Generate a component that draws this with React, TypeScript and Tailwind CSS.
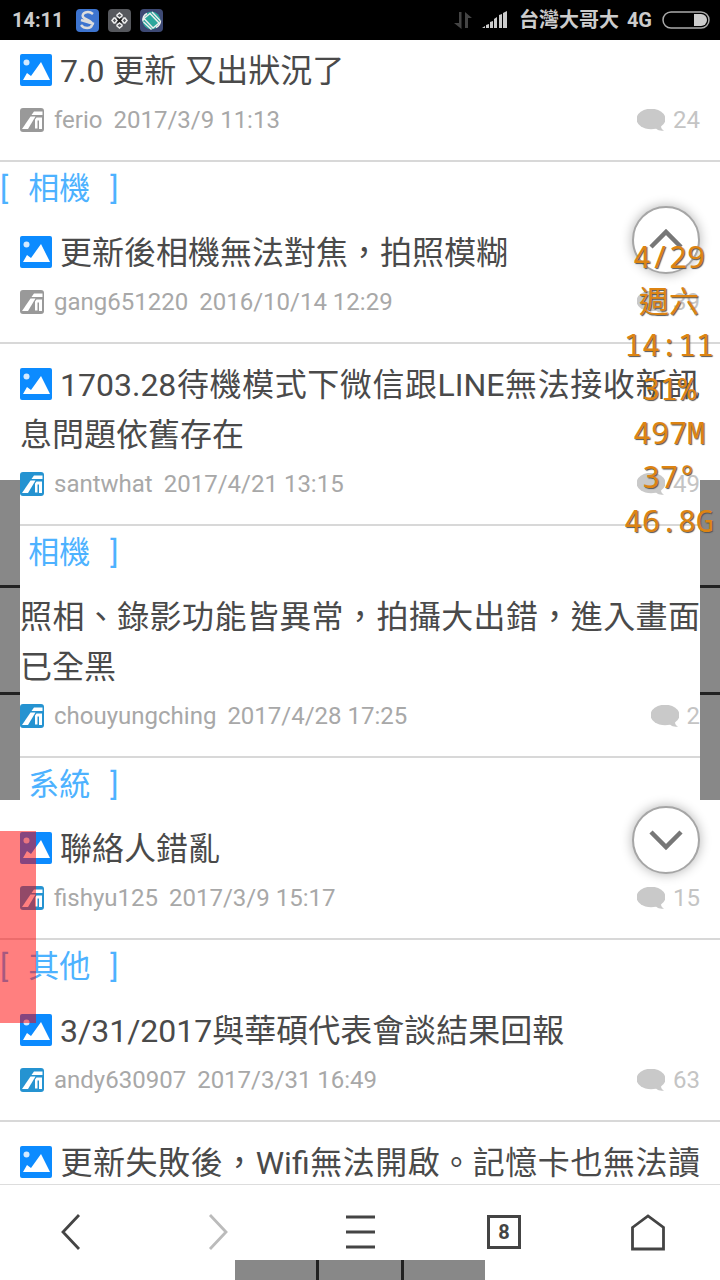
import { ReactNode } from "react";

type Post = {
  category?: string;
  title: string;
  hasImage?: boolean;
  author?: string;
  date?: string;
  replies?: number;
  asus?: boolean;
};

const posts: Post[] = [
  { title: "7.0 更新 又出狀況了", hasImage: true, author: "ferio", date: "2017/3/9 11:13", replies: 24 },
  { category: "相機", title: "更新後相機無法對焦，拍照模糊", hasImage: true, author: "gang651220", date: "2016/10/14 12:29", replies: 39 },
  { title: "1703.28待機模式下微信跟LINE無法接收新訊息問題依舊存在", hasImage: true, author: "santwhat", date: "2017/4/21 13:15", replies: 49, asus: true },
  { category: "相機", title: "照相、錄影功能皆異常，拍攝大出錯，進入畫面已全黑", author: "chouyungching", date: "2017/4/28 17:25", replies: 2, asus: true },
  { category: "系統", title: "聯絡人錯亂", hasImage: true, author: "fishyu125", date: "2017/3/9 15:17", replies: 15, asus: true },
  { category: "其他", title: "3/31/2017與華碩代表會談結果回報", hasImage: true, author: "andy630907", date: "2017/3/31 16:49", replies: 63, asus: true },
  { title: "更新失敗後，Wifi無法開啟。記憶卡也無法讀", hasImage: true },
];

const stats = ["4/29", "週六", "14:11", "31%", "497M", "37°", "46.8G"];

function ImageIcon() {
  return (
    <svg viewBox="0 0 32 32" className="mr-2 -mt-2 inline-block size-8 align-middle">
      <rect width="32" height="32" rx="2" fill="#0c8bff" />
      <circle cx="6.5" cy="8.5" r="3" fill="#d5eaff" />
      <path d="M3 26l4-7 4 3L21 8l9 18z" fill="#fff" />
    </svg>
  );
}

function AuthorIcon({ asus }: { asus?: boolean }) {
  return (
    <svg viewBox="0 0 24 24" className="size-6 shrink-0">
      <rect width="24" height="24" rx="3" fill={asus ? "#2593d1" : "#999"} />
      <path d="M2 21L10.500 8.500H15.500L8 21z" fill="#fff" />
      <path d="M11.500 7L14 3.500H22.500V7z" fill="#fff" />
      <path d="M16.500 9.500H22V21H19V12.500H17.500V20.500H15V11.500z" fill="#fff" />
    </svg>
  );
}

function BubbleIcon() {
  return (
    <svg viewBox="0 0 28 22" className="mr-2 h-[22px] w-7" fill="#c9c9c9">
      <ellipse cx="14" cy="10" rx="14.500" ry="10.300" />
      <path d="M17 19l7-2c0 2 1 4 3 4.500-3 .8-6-.2-8-2z" />
    </svg>
  );
}

function PostItem({ post }: { post: Post }) {
  return (
    <li className="border-b-2 border-[#d8d8d8]">
      {post.category && (
        <h2 className="flex h-[50px] gap-5 text-[31px] leading-[54px] text-[#4db2ff]">
          <span>[</span>
          <span>{post.category}</span>
          <span>]</span>
        </h2>
      )}
      <a href="#" className="block px-5 py-4">
        <h3 className={`text-justify text-[32px] leading-[50px] text-[#4a4a4a] ${post.author ? "" : "[text-align-last:justify]"}`}>
          {post.hasImage && <ImageIcon />}
          {post.title}
        </h3>
        {post.author && (
          <div className="flex h-12 items-center text-2xl text-[#a8a8a8]">
            <AuthorIcon asus={post.asus} />
            <span className="ml-2.5">{post.author}</span>
            <time className="ml-[11px]">{post.date}</time>
            <span className="ml-auto flex items-center text-[#c4c4c4]">
              <BubbleIcon />
              {post.replies}
            </span>
          </div>
        )}
      </a>
    </li>
  );
}

function StatusBar() {
  return (
    <header className="flex h-10 shrink-0 items-center bg-black pr-2.5 pl-3 text-xl font-bold text-[#ccc]">
      <span>14:11</span>
      <svg viewBox="0 0 23 23" className="ml-3 size-[23px]">
        <rect width="23" height="23" rx="4" fill="#3d74cf" />
        <path d="M17 5C12 1 5 4 7 8c2 3 10 3 9 8-1 4-8 4-11 0M5 11l13 4" stroke="#ddd" strokeWidth="2.500" fill="none" />
      </svg>
      <svg viewBox="0 0 23 23" className="ml-[9px] size-[23px]" fill="none" stroke="#eee" strokeWidth="1.500">
        <rect width="23" height="23" rx="4" fill="#56585d" stroke="none" />
        <rect x="9" y="9" width="5" height="5" rx="1" fill="#222" stroke="none" />
        <path d="M9 7V6l2.500-2L14 6v1l-2.500 2zM9 16v1l2.500 2 2.500-2v-1l-2.500-2zM7 9H6l-2 2.500L6 14h1l2-2.500zM16 9h1l2 2.500-2 2.500h-1l-2-2.500z" />
      </svg>
      <svg viewBox="0 0 23 23" className="ml-[9px] size-[23px]" fill="none">
        <rect width="23" height="23" rx="4" fill="#3d4974" />
        <circle cx="11.500" cy="11.500" r="9" fill="#2ba79c" />
        <path d="M4 9.500l6-5 9 9.500-6 5zM7 4.500C4 6 2.500 9 3 12.500M12 3l8 8.500M3.500 13l8 7.500M16 18.500c3-1.500 4.500-4 4.500-7" stroke="#eee" strokeWidth="1.400" />
      </svg>
      <svg viewBox="0 0 18 18" className="ml-auto h-[18px] w-[18px]" fill="#444">
        <path d="M5 1h2.500v17L0 12h5zM11 17V1l7 6h-4v10z" />
      </svg>
      <svg viewBox="0 0 25 18" className="ml-2.5 h-[18px] w-[25px]" fill="#ccc">
        <path d="M0 17l3-2v2zM4 14l3-1v4H4zM8 11l3-1v7H8zM12 8l3-2v11h-3zM17 4l3-1v14h-3zM21 2l4-2v17h-4z" />
      </svg>
      <span className="ml-3">台灣大哥大</span>
      <span className="ml-2">4G</span>
      <svg viewBox="0 0 48 18" className="ml-2.5 h-[18px] w-12">
        <rect x="1" y="1" width="46" height="16" rx="8" fill="none" stroke="#aaa" strokeWidth="1.500" />
        <path d="M32 3h7a6 6 0 010 12h-7z" fill="#ccc" />
      </svg>
    </header>
  );
}

function ScrollButton({ label, className, d }: { label: string; className: string; d: string }) {
  return (
    <button
      aria-label={label}
      className={`absolute right-5 size-[68px] rounded-full border-2 border-[#a6a6a6] bg-white shadow-[0_0_12px_rgba(0,0,0,0.3)] ${className}`}
    >
      <svg viewBox="0 0 64 64" className="size-full" fill="none" stroke="#777" strokeWidth="4.500">
        <path d={d} />
      </svg>
    </button>
  );
}

function NavButton({ label, children }: { label: string; children: ReactNode }) {
  return (
    <button aria-label={label} className="flex h-full flex-1 items-center justify-center">
      <svg viewBox="0 0 40 40" className="size-10" fill="none" stroke="#444" strokeWidth="2.800">
        {children}
      </svg>
    </button>
  );
}

export default function App() {
  return (
    <div className="relative flex h-screen flex-col overflow-hidden bg-white font-[Roboto,'Noto_Sans_CJK_TC',sans-serif]">
      <StatusBar />
      <main className="min-h-0 flex-1 overflow-hidden">
        <ul className="-mt-2.5">
          {posts.map((post) => (
            <PostItem key={post.title} post={post} />
          ))}
        </ul>
      </main>
      <nav className="flex h-24 shrink-0 items-center border-t border-[#ddd] bg-white pb-0.5">
        <NavButton label="Back">
          <path d="M27 3L11 20l16 17" />
        </NavButton>
        <NavButton label="Forward">
          <path d="M14 3l16 17-16 17" stroke="#bbb" />
        </NavButton>
        <NavButton label="Menu">
          <path d="M6 5h29M6 20h29M6 35h29" />
        </NavButton>
        <button aria-label="Tabs" className="flex h-full flex-1 items-center justify-center">
          <span className="flex size-[34px] items-center justify-center border-3 border-[#444] text-xl font-bold text-[#444]">8</span>
        </button>
        <NavButton label="Home">
          <path d="M4.500 15.500L20 4l15.500 11.500V37h-31z" />
        </NavButton>
      </nav>

      <ScrollButton label="Scroll up" className="top-[206px]" d="M17 39l15-15 15 15" />
      <ScrollButton label="Scroll down" className="top-[806px]" d="M17 24l15 15 15-15" />

      <div className="absolute top-[480px] left-0 flex h-80 w-5 flex-col divide-y-3 divide-[#222] bg-[#888]">
        <div className="flex-1" />
        <div className="flex-1" />
        <div className="flex-1" />
      </div>
      <div className="absolute top-[480px] right-0 flex h-80 w-5 flex-col divide-y-3 divide-[#222] bg-[#888]">
        <div className="flex-1" />
        <div className="flex-1" />
        <div className="flex-1" />
      </div>
      <div className="absolute bottom-0 left-1/2 flex h-5 w-[250px] -translate-x-1/2 divide-x-3 divide-[#222] bg-[#888]">
        <div className="flex-1" />
        <div className="flex-1" />
        <div className="flex-1" />
      </div>
      <div className="absolute top-[831px] left-0 h-48 w-9 bg-[#ff0000]/50" />

      <div className="absolute top-[235px] right-1.5 text-center font-['Noto_Sans_Mono','DejaVu_Sans_Mono','Noto_Sans_CJK_TC',monospace] text-[30px] leading-[44px] text-[#dd8412] [text-shadow:1px_1px_1px_#555]">
        {stats.map((stat) => (
          <div key={stat}>{stat}</div>
        ))}
      </div>
    </div>
  );
}
